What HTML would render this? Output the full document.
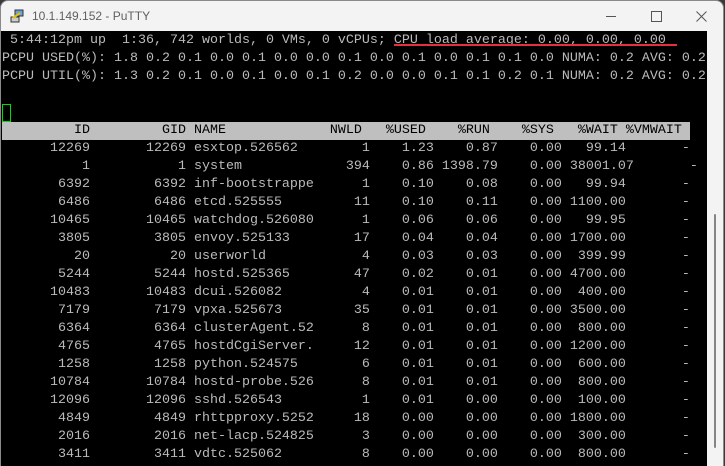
<!DOCTYPE html>
<html><head><meta charset="utf-8"><style>
html,body{margin:0;padding:0;width:725px;height:466px;overflow:hidden;background:#3a3a3a}
.win{position:absolute;left:0;top:0;width:724px;height:466px;background:#f3f3f3;border-radius:8px 8px 0 0;border:1px solid #8a8a8a;box-sizing:border-box}
.title{position:absolute;left:31px;top:8px;font:12px "Liberation Sans",sans-serif;color:#5f5f5f}
.term{position:absolute;left:1px;top:31px;width:706px;height:435px;background:#000;overflow:hidden}
pre{margin:0;position:absolute;left:1px;top:1px;font-family:"Liberation Mono",monospace;font-size:13.33px;line-height:18px;color:#bbbbbb;white-space:pre}
.hd{display:inline-block;width:688px;background:#bfbfbf;color:#000}
.cur{position:absolute;left:1px;top:73px;width:7px;height:16px;border:1px solid #00e000}
.ul{position:absolute;left:393px;top:13px;width:283px;height:2px;background:#e8303c}
.sb{position:absolute;left:707px;top:31px;width:16px;height:435px;background:#f3f3f3}
.thumb{position:absolute;left:714px;top:214px;width:2px;height:234px;background:#858585;border-radius:1px}
</style></head><body>
<div class="win">
<svg style="position:absolute;left:9px;top:8px" width="14" height="14" viewBox="0 0 14 14">
<rect x="1" y="8" width="8" height="5" fill="#ccc" stroke="#333" stroke-width="1"/>
<rect x="5" y="1" width="8" height="6" fill="#6aa0e0" stroke="#333" stroke-width="1"/>
<path d="M3 9 L10 4" stroke="#e8c000" stroke-width="2"/>
</svg>
<div class="title">10.1.149.152 - PuTTY</div>
<div style="position:absolute;left:605px;top:15px;width:10px;height:1px;background:#555"></div>
<div style="position:absolute;left:650px;top:10px;width:9px;height:9px;border:1px solid #555"></div>
<svg style="position:absolute;left:695px;top:10px" width="11" height="11"><path d="M0.5 0.5 L10.5 10.5 M10.5 0.5 L0.5 10.5" stroke="#555" stroke-width="1"/></svg>
</div>
<div class="term">
<pre> 5:44:12pm up  1:36, 742 worlds, 0 VMs, 0 vCPUs; CPU load average: 0.00, 0.00, 0.00
PCPU USED(%): 1.8 0.2 0.1 0.0 0.1 0.0 0.0 0.1 0.0 0.1 0.0 0.1 0.1 0.0 NUMA: 0.2 AVG: 0.2
PCPU UTIL(%): 1.3 0.2 0.1 0.0 0.1 0.0 0.1 0.2 0.0 0.0 0.1 0.1 0.2 0.1 NUMA: 0.2 AVG: 0.2


<span class="hd">         ID         GID NAME             NWLD   %USED    %RUN    %SYS   %WAIT %VMWAIT </span>
      12269       12269 esxtop.526562        1    1.23    0.87    0.00   99.14       -
          1           1 system             394    0.86 1398.79    0.00 38001.07       -
       6392        6392 inf-bootstrappe      1    0.10    0.08    0.00   99.94       -
       6486        6486 etcd.525555         11    0.10    0.11    0.00 1100.00       -
      10465       10465 watchdog.526080      1    0.06    0.06    0.00   99.95       -
       3805        3805 envoy.525133        17    0.04    0.04    0.00 1700.00       -
         20          20 userworld            4    0.03    0.03    0.00  399.99       -
       5244        5244 hostd.525365        47    0.02    0.01    0.00 4700.00       -
      10483       10483 dcui.526082          4    0.01    0.01    0.00  400.00       -
       7179        7179 vpxa.525673         35    0.01    0.01    0.00 3500.00       -
       6364        6364 clusterAgent.52      8    0.01    0.01    0.00  800.00       -
       4765        4765 hostdCgiServer.     12    0.01    0.01    0.00 1200.00       -
       1258        1258 python.524575        6    0.01    0.01    0.00  600.00       -
      10784       10784 hostd-probe.526      8    0.01    0.01    0.00  800.00       -
      12096       12096 sshd.526543          1    0.01    0.00    0.00  100.00       -
       4849        4849 rhttpproxy.5252     18    0.00    0.00    0.00 1800.00       -
       2016        2016 net-lacp.524825      3    0.00    0.00    0.00  300.00       -
       3411        3411 vdtc.525062          8    0.00    0.00    0.00  800.00       -</pre>
<div class="cur"></div>
<div class="ul"></div>
</div>
<div class="sb"></div>
<div class="thumb"></div>
</body></html>
